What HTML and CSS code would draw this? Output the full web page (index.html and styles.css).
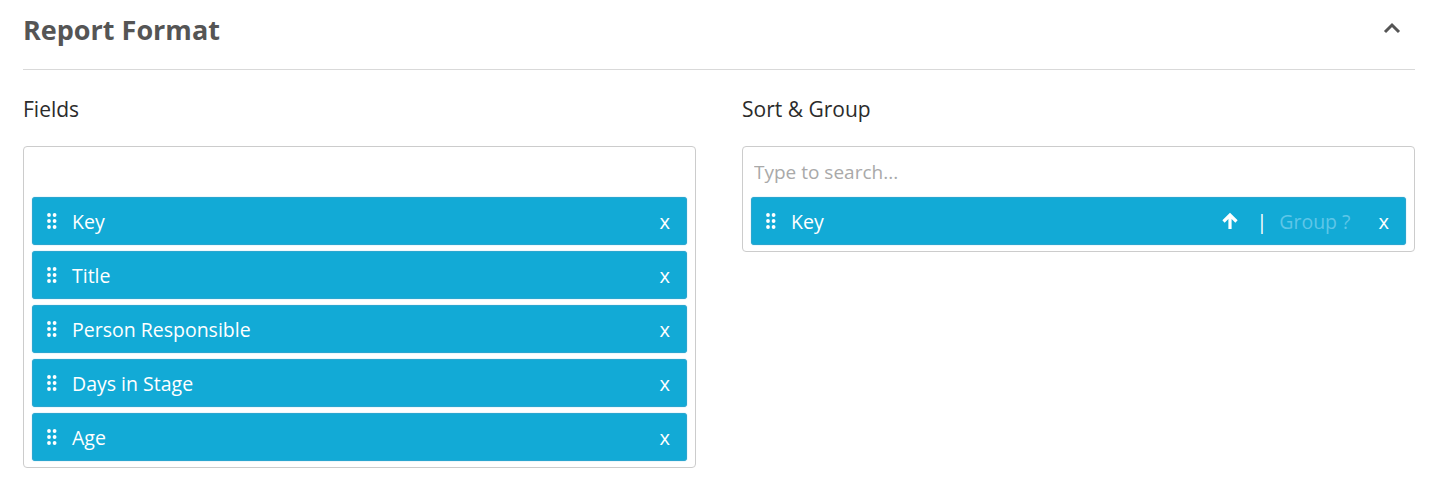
FILE: index.html
```html
<!DOCTYPE html>
<html lang="en">
<head>
    <meta charset="UTF-8">
    <title>Report Format</title>
    <link rel="stylesheet" href="styles.css">
</head>
<body>
    <svg width="0" height="0" style="position:absolute">
        <symbol id="grip" viewBox="0 0 10 18">
            <circle cx="2" cy="3" r="1.9"/><circle cx="7.6" cy="3" r="1.9"/>
            <circle cx="2" cy="9" r="1.9"/><circle cx="7.6" cy="9" r="1.9"/>
            <circle cx="2" cy="15" r="1.9"/><circle cx="7.6" cy="15" r="1.9"/>
        </symbol>
    </svg>
    <section class="panel">
        <header class="panel-head">
            <h1>Report Format</h1>
            <svg class="chevron" width="18" height="12" viewBox="0 0 18 12"><path d="M2 10 L9 3 L16 10" fill="none" stroke="#555" stroke-width="3"/></svg>
        </header>
        <div class="columns">
            <div class="col">
                <h2>Fields</h2>
                <div class="box">
                    <input class="search" type="text">
                    <div class="item"><svg class="grip"><use href="#grip"/></svg><span class="name">Key</span><span class="close">x</span></div>
                    <div class="item"><svg class="grip"><use href="#grip"/></svg><span class="name">Title</span><span class="close">x</span></div>
                    <div class="item"><svg class="grip"><use href="#grip"/></svg><span class="name">Person Responsible</span><span class="close">x</span></div>
                    <div class="item"><svg class="grip"><use href="#grip"/></svg><span class="name">Days in Stage</span><span class="close">x</span></div>
                    <div class="item"><svg class="grip"><use href="#grip"/></svg><span class="name">Age</span><span class="close">x</span></div>
                </div>
            </div>
            <div class="col">
                <h2>Sort &amp; Group</h2>
                <div class="box">
                    <input class="search" type="text" placeholder="Type to search...">
                    <div class="item">
                        <svg class="grip"><use href="#grip"/></svg><span class="name">Key</span>
                        <svg class="arrow" width="18" height="18" viewBox="0 0 18 18"><path d="M9 17 V3 M2.5 9.5 L9 3 L15.5 9.5" fill="none" stroke="#fff" stroke-width="3.2"/></svg>
                        <span class="sep">|</span>
                        <span class="group">Group ?</span>
                        <span class="close">x</span>
                    </div>
                </div>
            </div>
        </div>
    </section>
</body>
</html>
```

FILE: styles.css
```css
body {
    margin: 0;
    font-family: "Open Sans", sans-serif;
    background: #fff;
}
.panel {
    padding: 0 23px;
}
.panel-head {
    display: flex;
    align-items: center;
    justify-content: space-between;
    height: 69px;
    border-bottom: 1px solid #d9d9d9;
}
.panel-head h1 {
    margin: 0;
    margin-top: -10px;
    font-size: 27px;
    font-weight: 700;
    color: #555;
}
.chevron {
    margin-right: 14px;
    margin-top: -14px;
}
.columns {
    display: grid;
    grid-template-columns: 1fr 1fr;
    gap: 46px;
}
.col h2 {
    margin: 26px 0 24px;
    font-size: 21px;
    font-weight: 500;
    color: #2b2b2b;
    line-height: 26px;
}
.box {
    border: 1px solid #ccc;
    border-radius: 4px;
    padding: 0 8px 6px;
    display: flex;
    flex-direction: column;
    gap: 6px;
}
.search {
    border: none;
    outline: none;
    height: 38px;
    padding: 6px 3px 0;
    font-family: inherit;
    font-size: 19px;
    color: #333;
}
.search::placeholder {
    color: #a9a9a9;
}
.item {
    display: flex;
    align-items: center;
    height: 46px;
    background: #12aad6;
    border: 1px solid #2aa6d0;
    border-radius: 3px;
    box-shadow: 0 0 1px #4ab8dc;
    color: #fff;
    font-size: 19.5px;
    padding: 0 16px 0 14px;
}
.grip {
    width: 10px;
    height: 18px;
    fill: #fff;
    margin-right: 15px;
}
.name {
    flex: 1;
}
.arrow {
    margin-right: 18px;
}
.sep {
    margin-right: 12px;
}
.group {
    color: #5ec6e8;
    margin-right: 28px;
}
.close {
    font-size: 20px;
}
```
